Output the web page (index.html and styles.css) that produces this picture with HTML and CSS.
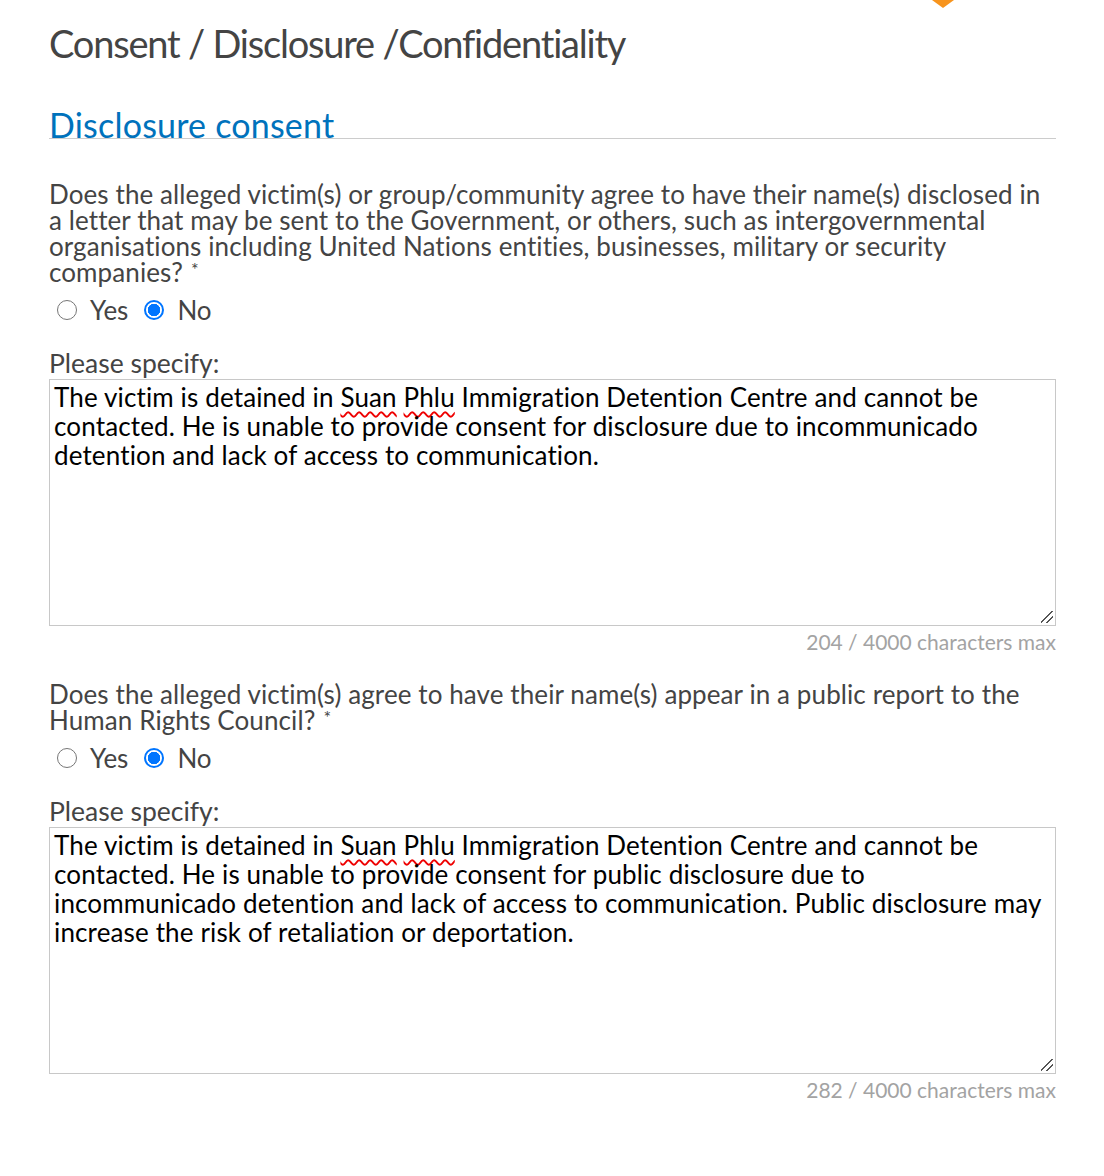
FILE: index.html
```html
<!DOCTYPE html>
<html>
<head>
<meta charset="utf-8">
<link rel="stylesheet" href="styles.css">
</head>
<body>
<div class="page">
  <div class="top-caret"></div>
  <h1 class="title">Consent / Disclosure /Confidentiality</h1>
  <h2 class="section">Disclosure consent</h2>

  <div class="field">
    <p class="question">Does the alleged victim(s) or group/community agree to have their name(s) disclosed in a letter that may be sent to the Government, or others, such as intergovernmental organisations including United Nations entities, businesses, military or security companies?<span class="req">*</span></p>
    <div class="radios">
      <label class="radio"><span class="dot"></span>Yes</label>
      <label class="radio"><span class="dot on"></span>No</label>
    </div>
    <p class="specify">Please specify:</p>
    <div class="textarea">The victim is detained in <span class="sp">Suan</span> <span class="sp">Phlu</span> Immigration Detention Centre and cannot be<br>contacted. He is unable to provide consent for disclosure due to incommunicado<br>detention and lack of access to communication.<span class="grip"></span></div>
    <div class="count">204 / 4000 characters max</div>
  </div>

  <div class="field second">
    <p class="question">Does the alleged victim(s) agree to have their name(s) appear in a public report to the Human Rights Council?<span class="req">*</span></p>
    <div class="radios">
      <label class="radio"><span class="dot"></span>Yes</label>
      <label class="radio"><span class="dot on"></span>No</label>
    </div>
    <p class="specify">Please specify:</p>
    <div class="textarea">The victim is detained in <span class="sp">Suan</span> <span class="sp">Phlu</span> Immigration Detention Centre and cannot be<br>contacted. He is unable to provide consent for public disclosure due to<br>incommunicado detention and lack of access to communication. Public disclosure may<br>increase the risk of retaliation or deportation.<span class="grip"></span></div>
    <div class="count">282 / 4000 characters max</div>
  </div>
</div>
</body>
</html>
```
FILE: styles.css
```css
html, body {
  margin: 0;
  padding: 0;
  background: #fff;
}
body {
  font-family: Lato, "Open Sans", sans-serif;
  color: #444;
}
.page {
  position: relative;
  width: 1007px;
  padding: 20px 0 60px 49px;
}
.top-caret {
  position: absolute;
  left: 932px;
  top: 0;
  width: 0;
  height: 0;
  border-left: 11px solid transparent;
  border-right: 11px solid transparent;
  border-top: 8px solid #f7941d;
}
.title {
  margin: 0;
  font-size: 38px;
  font-weight: 400;
  line-height: 46px;
  letter-spacing: -1.2px;
  color: #444;
}
.section {
  margin: 46px 0 0;
  font-size: 34px;
  font-weight: 400;
  line-height: 26px;
  letter-spacing: 0.2px;
  color: #0072bc;
  border-bottom: 1px solid #ccc;
  padding-bottom: 0;
}
.field {
  margin-top: 42px;
}
.field.second {
  margin-top: 23px;
}
.question {
  margin: 0;
  font-size: 26px;
  line-height: 26px;
  letter-spacing: 0.1px;
  color: #444;
}
.req {
  display: inline-block;
  margin-left: 8px;
  font-size: 18px;
  line-height: 12px;
  vertical-align: 6px;
}
.radios {
  display: flex;
  align-items: center;
  gap: 16px;
  margin: 10px 0 0 8px;
  height: 30px;
}
.radio {
  display: flex;
  align-items: center;
  gap: 13px;
  font-size: 26px;
  color: #444;
}
.dot {
  box-sizing: border-box;
  width: 20px;
  height: 20px;
  border-radius: 50%;
  border: 1.5px solid #767676;
  background: #fff;
}
.dot.on {
  border: 2px solid #0075ff;
  background: radial-gradient(circle, #0075ff 0 6px, #fff 6.5px);
}
.specify {
  margin: 24px 0 2px;
  font-size: 26.5px;
  line-height: 28px;
  color: #444;
}
.textarea {
  position: relative;
  box-sizing: border-box;
  height: 247px;
  border: 1px solid #c8c8c8;
  padding: 3px 1px 3px 4px;
  font-size: 26px;
  line-height: 29px;
  letter-spacing: 0.14px;
  white-space: nowrap;
  overflow: hidden;
  color: #000;
}
.sp {
  text-decoration: underline wavy #e00;
  text-decoration-thickness: 1.5px;
  text-underline-offset: 4px;
}
.grip {
  position: absolute;
  right: 2px;
  bottom: 2px;
  width: 12px;
  height: 12px;
  background: linear-gradient(135deg, transparent 0 45%, #555 45% 52%, transparent 52% 70%, #555 70% 78%, transparent 78%);
}
.count {
  text-align: right;
  font-size: 21px;
  line-height: 32px;
  color: #a3a3a3;
}
```
